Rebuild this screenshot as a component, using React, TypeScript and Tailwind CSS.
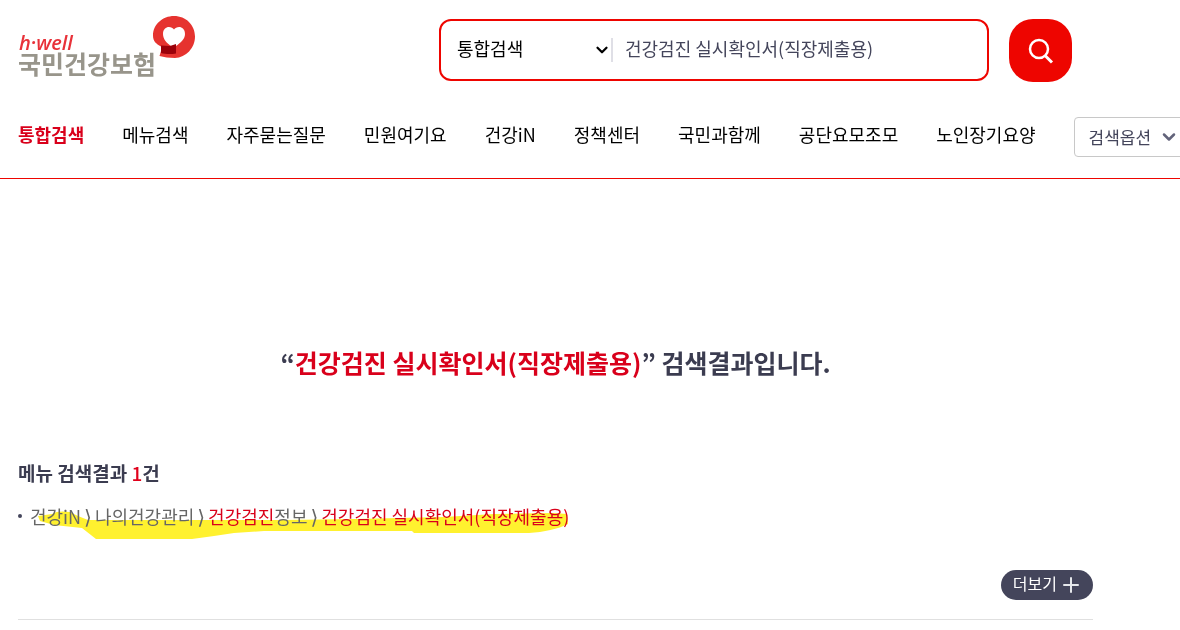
import { useState } from "react";
import { ChevronDown, Plus } from "lucide-react";

const TABS = [
  "통합검색",
  "메뉴검색",
  "자주묻는질문",
  "민원여기요",
  "건강iN",
  "정책센터",
  "국민과함께",
  "공단요모조모",
  "노인장기요양",
];

const KEYWORD = "건강검진 실시확인서(직장제출용)";

function Logo() {
  return (
    <a href="#" className="flex items-start" aria-label="h-well 국민건강보험">
      <span className="flex flex-col pt-[18px]">
        <span className="pl-px font-['Open_Sans',sans-serif] text-xl leading-5 font-semibold italic text-[#e8323a]">
          h·well
        </span>
        <span className="text-[25px] leading-5 font-bold text-[#98958b]">국민건강보험</span>
      </span>
      <svg width="44" height="44" viewBox="0 0 44 44" aria-hidden="true" className="-ml-1">
        <path
          d="M22 1C34 1 43 10 43 21.500C43 33 34 42.500 23 43C17 43 12 42 7.500 41L9 36V31.500C4 29 1 26 1 20.500C1 9.500 10.500 1 22 1Z"
          fill="#e6332f"
        />
        <path
          d="M22 14.500C24.500 10.500 33 10.500 33 19C33 24 29 27.500 24 31H19C14.500 28 11 24 11 19C11 10.500 19.500 10.500 22 14.500Z"
          fill="#fff"
        />
        <path d="M9 30.500L18 31L24 29V38.500C18 39.500 13 39 9 38Z" fill="#9b0009" />
      </svg>
    </a>
  );
}

function SearchForm() {
  const [query, setQuery] = useState(KEYWORD);

  return (
    <form className="flex gap-5" onSubmit={(e) => e.preventDefault()}>
      <div className="flex h-[62px] w-[550px] items-center rounded-xl border-2 border-[#ee0500] px-4">
        <div className="relative flex w-[156px] items-center border-r-2 border-[#dfdfe6]">
          <select
            aria-label="검색 범위"
            className="h-6 w-full appearance-none bg-transparent pb-1 text-lg leading-5 text-black outline-none"
          >
            {TABS.map((t) => (
              <option key={t}>{t}</option>
            ))}
          </select>
          <ChevronDown
            size={18}
            strokeWidth={3}
            className="pointer-events-none absolute right-0 text-black"
          />
        </div>
        <input
          type="text"
          aria-label="검색어"
          value={query}
          onChange={(e) => setQuery(e.target.value)}
          className="h-8 min-w-0 flex-1 pb-1 pl-3 text-lg text-[#44455b] outline-none"
        />
      </div>
      <button
        type="submit"
        aria-label="검색"
        className="flex size-[63px] items-center justify-center rounded-3xl bg-[#ee0500] text-white"
      >
        <svg width="26" height="26" viewBox="0 0 26 26" fill="none" stroke="currentColor" strokeWidth="2.500">
          <circle cx="11" cy="11" r="9" />
          <path d="M17 17.500L24 24.500" strokeWidth="3" />
        </svg>
      </button>
    </form>
  );
}

// Highlighter stroke running under the breadcrumb
function Highlight() {
  return (
    <svg
      width="540"
      height="32"
      viewBox="0 0 540 32"
      className="pointer-events-none absolute top-1.5 left-4 mix-blend-multiply"
      aria-hidden="true"
    >
      <path
        d="M4 8L18 6C22 3 30 3 36 4L44 8L54 12H250L320 11L410 9L460 6L520 5L533 6L534 16C524 21 510 24 495 25H380L378 23H230L200 25L180 28L158 31H62L48 20L20 17L6 13Z"
        fill="#fff12f"
      />
    </svg>
  );
}

function Separator() {
  return <span className="mx-[3px] font-['DejaVu_Sans',sans-serif] text-xl leading-5">⟩</span>;
}

export default function App() {
  const [tab, setTab] = useState(TABS[0]);

  return (
    <div className="overflow-hidden bg-white font-['Noto_Sans_CJK_KR',sans-serif] text-[#3b3c50]">
      <header className="border-b border-[#ee0500] pb-[21px]">
        <div className="flex items-start justify-between pt-[19px] pr-[108px] pl-[18px]">
          <div className="-mt-1">
            <Logo />
          </div>
          <SearchForm />
        </div>
        <nav className="mt-[35px] flex items-start gap-[38px] pl-[18px]">
          {TABS.map((t) => (
            <button
              key={t}
              type="button"
              onClick={() => setTab(t)}
              className={
                t === tab
                  ? "shrink-0 text-lg leading-[34px] font-bold text-[#d9001b]"
                  : "shrink-0 text-lg leading-[34px] text-black"
              }
            >
              {t}
            </button>
          ))}
          <button
            type="button"
            className="flex h-10 shrink-0 items-center gap-2 rounded border border-[#c8c8c8] px-3.5 text-[17px] text-[#44455b]"
          >
            검색옵션
            <ChevronDown size={20} strokeWidth={3} className="text-[#62637a]" />
          </button>
        </nav>
      </header>

      <main className="mr-[87px] ml-[18px] border-b border-[#e0e0e0] pb-[19px]">
        <h1 className="pt-[163px] text-center text-[25px] leading-10 font-bold">
          “<span className="text-[#d9001b]">{KEYWORD}</span>” 검색결과입니다.
        </h1>

        <section className="pt-[77px]">
          <h2 className="text-[19px] leading-7 font-bold">
            메뉴 검색결과 <span className="font-medium text-[#e0001b]">1</span>건
          </h2>
          <ul className="pt-[15px]">
            <li className="relative flex items-center gap-2">
              <Highlight />
              <span className="size-1 rounded-full bg-[#44455b]" />
              <a href="#" className="relative text-lg leading-7 text-[#666]">
                건강iN
                <Separator />
                나의건강관리
                <Separator />
                <span className="text-[#d9001b]">건강검진</span>정보
                <Separator />
                <span className="text-[#d9001b]">{KEYWORD}</span>
              </a>
            </li>
          </ul>
          <div className="flex justify-end pt-10">
            <button
              type="button"
              className="flex h-[30px] items-center gap-0.5 rounded-full bg-[#44455b] pr-2.5 pl-3 text-base text-white"
            >
              <span className="pb-1 leading-6">더보기</span>
              <Plus size={24} className="text-gray-200" />
            </button>
          </div>
        </section>
      </main>
    </div>
  );
}
